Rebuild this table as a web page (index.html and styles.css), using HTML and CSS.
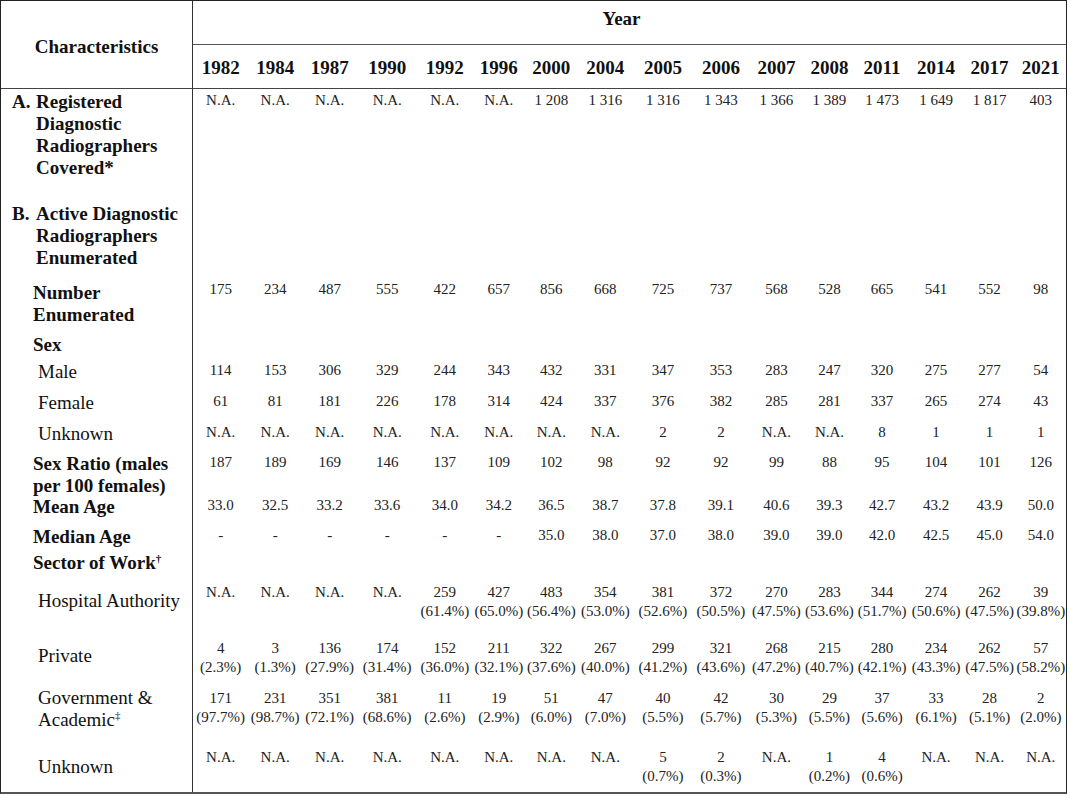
FILE: index.html
```html
<!DOCTYPE html>
<html lang="en">
<head>
<meta charset="utf-8">
<title>Diagnostic Radiographers</title>
<link rel="stylesheet" href="styles.css">
</head>
<body>
<table class="stats">
<colgroup>
<col class="c-label">
<col style="width:55px"><col style="width:54px"><col style="width:55px"><col style="width:60px">
<col style="width:55px"><col style="width:53px"><col style="width:52px"><col style="width:56px">
<col style="width:59px"><col style="width:57px"><col style="width:54px"><col style="width:52px">
<col style="width:53px"><col style="width:55px"><col style="width:52px"><col style="width:50px">
</colgroup>
<thead>
<tr class="h-year">
<th class="char" rowspan="2">Characteristics</th>
<th class="year" colspan="16">Year</th>
</tr>
<tr class="h-years">
<th>1982</th><th>1984</th><th>1987</th><th>1990</th><th>1992</th><th>1996</th><th>2000</th><th>2004</th><th>2005</th><th>2006</th><th>2007</th><th>2008</th><th>2011</th><th>2014</th><th>2017</th><th>2021</th>
</tr>
</thead>
<tbody>
<tr class="r-a">
<td class="lab"><div class="sec"><span class="mark">A.</span><span>Registered<br>Diagnostic<br>Radiographers<br>Covered*</span></div></td>
<td>N.A.</td><td>N.A.</td><td>N.A.</td><td>N.A.</td><td>N.A.</td><td>N.A.</td><td>1 208</td><td>1 316</td><td>1 316</td><td>1 343</td><td>1 366</td><td>1 389</td><td>1 473</td><td>1 649</td><td>1 817</td><td>403</td>
</tr>
<tr class="r-b">
<td class="lab"><div class="sec"><span class="mark">B.</span><span>Active Diagnostic<br>Radiographers<br>Enumerated</span></div></td>
<td></td><td></td><td></td><td></td><td></td><td></td><td></td><td></td><td></td><td></td><td></td><td></td><td></td><td></td><td></td><td></td>
</tr>
<tr class="r-num">
<td class="lab sub pad4">Number<br>Enumerated</td>
<td>175</td><td>234</td><td>487</td><td>555</td><td>422</td><td>657</td><td>856</td><td>668</td><td>725</td><td>737</td><td>568</td><td>528</td><td>665</td><td>541</td><td>552</td><td>98</td>
</tr>
<tr class="r-sex">
<td class="lab sub">Sex</td>
<td></td><td></td><td></td><td></td><td></td><td></td><td></td><td></td><td></td><td></td><td></td><td></td><td></td><td></td><td></td><td></td>
</tr>
<tr class="r-male">
<td class="lab item">Male</td>
<td>114</td><td>153</td><td>306</td><td>329</td><td>244</td><td>343</td><td>432</td><td>331</td><td>347</td><td>353</td><td>283</td><td>247</td><td>320</td><td>275</td><td>277</td><td>54</td>
</tr>
<tr class="r-female">
<td class="lab item">Female</td>
<td>61</td><td>81</td><td>181</td><td>226</td><td>178</td><td>314</td><td>424</td><td>337</td><td>376</td><td>382</td><td>285</td><td>281</td><td>337</td><td>265</td><td>274</td><td>43</td>
</tr>
<tr class="r-unk">
<td class="lab item">Unknown</td>
<td>N.A.</td><td>N.A.</td><td>N.A.</td><td>N.A.</td><td>N.A.</td><td>N.A.</td><td>N.A.</td><td>N.A.</td><td>2</td><td>2</td><td>N.A.</td><td>N.A.</td><td>8</td><td>1</td><td>1</td><td>1</td>
</tr>
<tr class="r-ratio">
<td class="lab sub"><div class="tight">Sex Ratio (males<br>per 100 females)</div></td>
<td>187</td><td>189</td><td>169</td><td>146</td><td>137</td><td>109</td><td>102</td><td>98</td><td>92</td><td>92</td><td>99</td><td>88</td><td>95</td><td>104</td><td>101</td><td>126</td>
</tr>
<tr class="r-mean">
<td class="lab sub">Mean Age</td>
<td>33.0</td><td>32.5</td><td>33.2</td><td>33.6</td><td>34.0</td><td>34.2</td><td>36.5</td><td>38.7</td><td>37.8</td><td>39.1</td><td>40.6</td><td>39.3</td><td>42.7</td><td>43.2</td><td>43.9</td><td>50.0</td>
</tr>
<tr class="r-median">
<td class="lab sub">Median Age</td>
<td>-</td><td>-</td><td>-</td><td>-</td><td>-</td><td>-</td><td>35.0</td><td>38.0</td><td>37.0</td><td>38.0</td><td>39.0</td><td>39.0</td><td>42.0</td><td>42.5</td><td>45.0</td><td>54.0</td>
</tr>
<tr class="r-sector">
<td class="lab sub">Sector of Work<sup>†</sup></td>
<td></td><td></td><td></td><td></td><td></td><td></td><td></td><td></td><td></td><td></td><td></td><td></td><td></td><td></td><td></td><td></td>
</tr>
<tr class="r-ha">
<td class="lab item pad9">Hospital Authority</td>
<td>N.A.</td><td>N.A.</td><td>N.A.</td><td>N.A.</td><td>259<br>(61.4%)</td><td>427<br>(65.0%)</td><td>483<br>(56.4%)</td><td>354<br>(53.0%)</td><td>381<br>(52.6%)</td><td>372<br>(50.5%)</td><td>270<br>(47.5%)</td><td>283<br>(53.6%)</td><td>344<br>(51.7%)</td><td>274<br>(50.6%)</td><td>262<br>(47.5%)</td><td>39<br>(39.8%)</td>
</tr>
<tr class="r-priv">
<td class="lab item pad8">Private</td>
<td>4<br>(2.3%)</td><td>3<br>(1.3%)</td><td>136<br>(27.9%)</td><td>174<br>(31.4%)</td><td>152<br>(36.0%)</td><td>211<br>(32.1%)</td><td>322<br>(37.6%)</td><td>267<br>(40.0%)</td><td>299<br>(41.2%)</td><td>321<br>(43.6%)</td><td>268<br>(47.2%)</td><td>215<br>(40.7%)</td><td>280<br>(42.1%)</td><td>234<br>(43.3%)</td><td>262<br>(47.5%)</td><td>57<br>(58.2%)</td>
</tr>
<tr class="r-gov">
<td class="lab item pad0">Government &amp;<br>Academic<sup>‡</sup></td>
<td>171<br>(97.7%)</td><td>231<br>(98.7%)</td><td>351<br>(72.1%)</td><td>381<br>(68.6%)</td><td>11<br>(2.6%)</td><td>19<br>(2.9%)</td><td>51<br>(6.0%)</td><td>47<br>(7.0%)</td><td>40<br>(5.5%)</td><td>42<br>(5.7%)</td><td>30<br>(5.3%)</td><td>29<br>(5.5%)</td><td>37<br>(5.6%)</td><td>33<br>(6.1%)</td><td>28<br>(5.1%)</td><td>2<br>(2.0%)</td>
</tr>
<tr class="r-unk2">
<td class="lab item pad10">Unknown</td>
<td>N.A.</td><td>N.A.</td><td>N.A.</td><td>N.A.</td><td>N.A.</td><td>N.A.</td><td>N.A.</td><td>N.A.</td><td>5<br>(0.7%)</td><td>2<br>(0.3%)</td><td>N.A.</td><td>1<br>(0.2%)</td><td>4<br>(0.6%)</td><td>N.A.</td><td>N.A.</td><td>N.A.</td>
</tr>
</tbody>
</table>
</body>
</html>
```
FILE: styles.css
```css
html, body {
  margin: 0;
  padding: 0;
  background: #ffffff;
}

body {
  font-family: "Liberation Serif", "Times New Roman", serif;
  color: #111;
}

.stats {
  border-collapse: separate;
  border-spacing: 0;
  table-layout: fixed;
  width: 1067px;
  border: 1px solid #222;
  border-bottom: 2px solid #555;
}

.c-label {
  width: 192px;
}

.stats th,
.stats td {
  padding: 0;
  vertical-align: top;
}

.stats th {
  font-weight: bold;
  font-size: 19px;
  line-height: 22px;
  color: #111;
}

.stats th.char {
  vertical-align: middle;
  text-align: center;
  padding-top: 4px;
  border-right: 1px solid #333;
  border-bottom: 1px solid #444;
}

.stats th.year {
  text-align: center;
  padding-top: 7px;
  padding-right: 16px;
  border-bottom: 1px solid #555;
}

.h-year {
  height: 44px;
}

.h-years {
  height: 44px;
}

.h-years th {
  padding-top: 12px;
  text-align: center;
  border-bottom: 1px solid #444;
}

.stats td {
  font-size: 15px;
  line-height: 19px;
  padding-top: 2px;
  text-align: center;
  color: #222;
  white-space: nowrap;
}

.stats td.lab {
  text-align: left;
  font-size: 19px;
  line-height: 22px;
  color: #111;
  border-right: 1px solid #333;
  white-space: normal;
}

.sec {
  display: flex;
  font-weight: bold;
  padding-left: 11px;
}

.mark {
  width: 24px;
  flex: none;
}

.tight {
  margin-bottom: -4px;
}

.stats td.sub {
  font-weight: bold;
  padding-left: 32px;
}

.stats td.item {
  padding-left: 37px;
}

.stats td.pad4 { padding-top: 4px; }
.stats td.pad9 { padding-top: 9px; }
.stats td.pad8 { padding-top: 8px; }
.stats td.pad0 { padding-top: 0; }
.stats td.pad10 { padding-top: 10px; }

sup {
  font-size: 11px;
  line-height: 0;
  vertical-align: 7px;
}

.r-a { height: 112px; }
.r-b { height: 77px; }
.r-num { height: 54px; }
.r-sex { height: 27px; }
.r-male { height: 31px; }
.r-female { height: 31px; }
.r-unk { height: 30px; }
.r-ratio { height: 43px; }
.r-mean { height: 30px; }
.r-median { height: 26px; }
.r-sector { height: 31px; }
.r-ha { height: 56px; }
.r-priv { height: 50px; }
.r-gov { height: 59px; }
.r-unk2 { height: 46px; }
```
